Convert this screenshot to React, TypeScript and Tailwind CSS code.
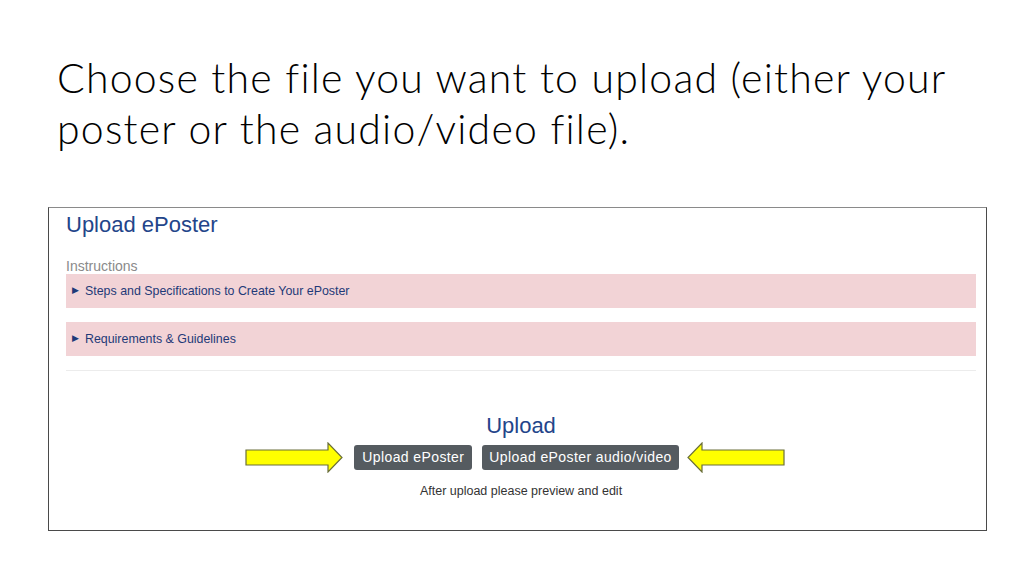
import React from 'react';

const Arrow: React.FC<{ flip?: boolean }> = ({ flip }) => (
  <svg
    width="99"
    height="31"
    viewBox="0 0 99 31"
    className={flip ? '-scale-x-100' : ''}
    aria-hidden="true"
  >
    <path
      d="M1 8 L83 8 L83 1 L97 15.5 L83 30 L83 23 L1 23 Z"
      fill="#ffff00"
      stroke="#6b6f3a"
      strokeWidth="1.2"
    />
  </svg>
);

const Row: React.FC<{ label: string }> = ({ label }) => (
  <div className="h-[34px] bg-[#f2d3d6] flex items-center px-[6px] gap-[6px] text-[12.4px] text-[#1f3a78]">
    <span className="text-[9px] text-[#1f3a78]">▶</span>
    <span>{label}</span>
  </div>
);

const App: React.FC = () => {
  return (
    <div className="w-[1024px] h-[576px] bg-white overflow-hidden">
      {/* Slide title */}
      <h1 className="pt-[52px] pl-[57px] text-[41px] leading-[51px] tracking-[1.2px] font-light text-black font-['Lato',sans-serif]">
        Choose the file you want to upload (either your
        <br />
        poster or the audio/video file).
      </h1>

      {/* Screenshot panel */}
      <div className="mt-[53px] ml-[48px] w-[939px] h-[324px] border border-[#4a4a4a] border-t-[#8a8a8a] pl-[17px] pr-[10px] font-['Liberation_Sans',Arial,sans-serif]">
        <div className="pt-[4px] text-[22px] leading-[26px] text-[#23458a]">Upload ePoster</div>
        <div className="mt-[20px] text-[14px] leading-[16px] text-[#8a8a8a]">Instructions</div>
        <Row label="Steps and Specifications to Create Your ePoster" />
        <div className="h-[14px]" />
        <Row label="Requirements & Guidelines" />
        <div className="mt-[14px] border-t border-[#ececec]" />

        <div className="flex flex-col items-center">
          <div className="mt-[42px] text-[22px] leading-[26px] text-[#23458a]">Upload</div>
          <div className="mt-[3px] pr-[12px] flex items-center">
            <Arrow />
            <div className="ml-[10px] flex gap-[10px]">
              <button className="h-[25px] px-[8px] rounded-[3px] bg-[#555b60] text-white text-[14px] tracking-[0.4px]">
                Upload ePoster
              </button>
              <button className="h-[25px] px-[7px] rounded-[3px] bg-[#555b60] text-white text-[14px] tracking-[0.4px]">
                Upload ePoster audio/video
              </button>
            </div>
            <div className="ml-[7px]">
              <Arrow flip />
            </div>
          </div>
          <div className="mt-[9px] text-[12.5px] text-[#333]">After upload please preview and edit</div>
        </div>
      </div>
    </div>
  );
};

export default App;
